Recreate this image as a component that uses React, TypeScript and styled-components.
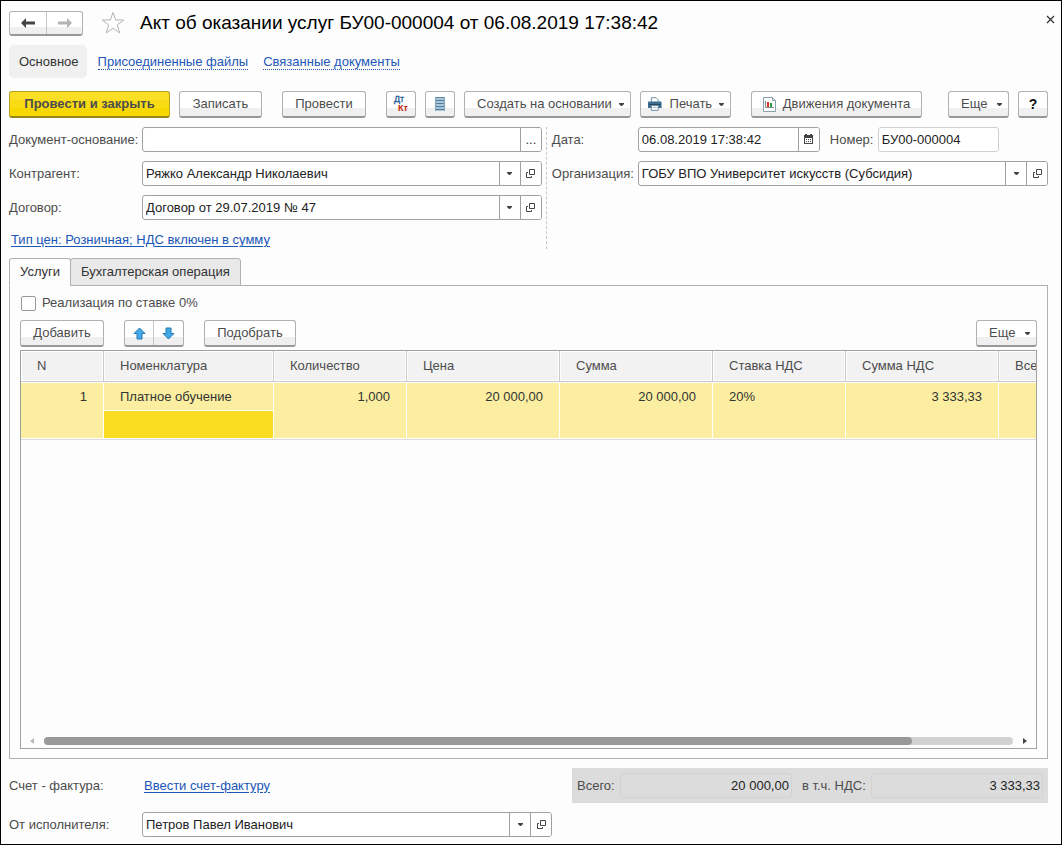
import React from "react";
import styled, { createGlobalStyle, css } from "styled-components";

const GlobalStyle = createGlobalStyle`
  *, *::before, *::after { box-sizing: border-box; }
  body { margin: 0; background: #fff; }
  body, button, input { font-family: "Liberation Sans", Arial, sans-serif; font-size: 13px; line-height: 16px; }
  button { cursor: pointer; }
`;

const Window = styled.main`
  display: flex;
  flex-direction: column;
  min-height: 100vh;
  padding: 8px 13px 7px 8px;
  border: 1px solid #000;
  background: #fdfdfd;
  color: #4c4c4c;
`;

const Header = styled.header`
  display: flex;
  align-items: center;
  height: 28px;
  margin-right: -9px;
`;

const Title = styled.h1`
  flex: 1;
  margin: 0 0 0 15px;
  font-size: 19px;
  line-height: 24px;
  font-weight: 400;
  color: #000;
  white-space: nowrap;
`;

const PlainButton = styled.button`
  display: flex;
  padding: 0;
  border: 0;
  background: none;
`;

const CloseButton = styled(PlainButton)`
  padding: 2px;
  margin-bottom: 8px;
`;

const StarButton = styled(PlainButton)`
  margin-left: 18px;
`;

const raised = css`
  border: 1px solid #b1b1b1;
  border-bottom: 2px solid #989898;
  border-radius: 3px;
  background: linear-gradient(#fff 0 66%, #f0f0f0 66% 100%);
`;

const ButtonGroup = styled.div<{ $height: number }>`
  ${raised}
  display: inline-flex;
  height: ${(p) => p.$height}px;
  overflow: hidden;
`;

const MoveGroup = styled(ButtonGroup)`
  margin: 0 20px;
`;

const GroupButton = styled.button<{ $width: number }>`
  display: flex;
  align-items: center;
  justify-content: center;
  width: ${(p) => p.$width}px;
  padding: 0;
  border: 0;
  background: none;
  & + & { border-left: 1px solid #c6c6c6; }
`;

const Button = styled.button<{ $width: number; $gap?: number; $primary?: boolean }>`
  ${raised}
  display: flex;
  flex: none;
  align-items: center;
  justify-content: center;
  gap: 7px;
  width: ${(p) => p.$width}px;
  height: 27px;
  margin-left: ${(p) => p.$gap ?? 0}px;
  padding: 0;
  color: #4c4c4c;
  white-space: nowrap;
  ${(p) =>
    p.$primary &&
    css`
      border-color: #b5a11c;
      border-bottom-color: #97871a;
      background: linear-gradient(#fbdf27 0 32%, #fadc14 32% 66%, #f7d800 66% 100%);
      font-weight: 700;
    `}
`;

const MenuButton = styled(Button)<{ $withIcon?: boolean }>`
  justify-content: flex-start;
  padding: 0 6px 0 ${(p) => (p.$withIcon ? 6 : 12)}px;
  & > svg:last-child { margin-left: auto; }
`;

const HelpButton = styled(Button)`
  color: #111;
  font-size: 14px;
  font-weight: 700;
`;

const Sections = styled.nav`
  display: flex;
  align-items: center;
  gap: 15px;
  height: 33px;
  margin-top: 8px;
`;

const CurrentSection = styled.span`
  display: flex;
  align-items: center;
  height: 33px;
  margin-right: -4px;
  padding: 1px 8px 0 10px;
  border-radius: 5px;
  background: #f0f0f0;
  color: #333;
`;

const SectionLink = styled.a`
  padding-top: 1px;
  border-bottom: 1px dotted #2257b8;
  color: #2257b8;
  line-height: 15px;
  text-decoration: none;
`;

const Link = styled.a`
  color: #1a55b8;
  text-decoration: underline;
  text-underline-offset: 2px;
`;

const Toolbar = styled.div`
  display: flex;
  align-items: center;
`;

const MainToolbar = styled(Toolbar)`
  margin-top: 13px;
`;

const TableToolbar = styled(Toolbar)`
  margin-top: 9px;
`;

const Spacer = styled.div`
  flex: 1;
`;

const Form = styled.div`
  display: flex;
  margin-top: 9px;
`;

const FormMain = styled.div`
  display: flex;
  flex: 538 1 0;
  flex-direction: column;
  gap: 9px;
  height: 122px;
  padding-right: 4px;
  border-right: 1px dashed #c8c8c8;
`;

const FormSide = styled.div`
  display: flex;
  flex: 501 1 0;
  flex-direction: column;
  gap: 9px;
  padding-left: 5px;
`;

const Row = styled.div`
  display: flex;
  align-items: center;
  height: 25px;
`;

const Label = styled.label<{ $width: number }>`
  flex: none;
  width: ${(p) => p.$width}px;
  white-space: nowrap;
`;

const Field = styled.div<{ $width?: number; $muted?: boolean }>`
  display: flex;
  flex: ${(p) => (p.$width ? `0 0 ${p.$width}px` : "1")};
  height: 25px;
  border: 1px solid ${(p) => (p.$muted ? "#d0d0d0" : "#a0a0a0")};
  border-radius: 3px;
  background: #fff;
  overflow: hidden;
`;

const TextBox = styled.input`
  flex: 1;
  min-width: 0;
  width: 0;
  padding: 0 3px;
  border: 0;
  outline: 0;
  background: transparent;
  color: #222;
`;

const FieldButton = styled.button`
  display: flex;
  flex: none;
  align-items: center;
  justify-content: center;
  width: 21px;
  padding: 0;
  border: 0;
  border-left: 1px solid #a0a0a0;
  background: #fff;
  color: #333;
`;

const NumberLabel = styled(Label)`
  margin-left: 10px;
`;

const PriceType = styled.div`
  margin-top: -17px;
  padding-left: 2px;
`;

const Tabs = styled.div`
  display: flex;
  margin-top: 10px;
`;

const Tab = styled.button<{ $active?: boolean }>`
  position: relative;
  height: 28px;
  margin-bottom: -1px;
  padding: 0 10px;
  border: 1px solid #b0b0b0;
  border-radius: 3px 3px 0 0;
  background: #e9e9e9;
  color: #333;
  & + & { margin-left: -1px; }
  ${(p) =>
    p.$active &&
    css`
      border-bottom-color: #fdfdfd;
      background: #fdfdfd;
    `}
`;

const Panel = styled.section`
  display: flex;
  flex: 1;
  flex-direction: column;
  min-width: 0;
  padding: 9px 10px;
  border: 1px solid #b0b0b0;
`;

const CheckLabel = styled.label`
  display: flex;
  align-items: center;
  gap: 6px;
  height: 16px;
`;

const CheckBox = styled.input`
  width: 15px;
  height: 15px;
  margin: 0 0 0 1px;
  border: 1px solid #999;
  border-radius: 2px;
  background: #fff;
  appearance: none;
`;

const Grid = styled.div`
  display: flex;
  flex: 1;
  flex-direction: column;
  min-width: 0;
  margin-top: 3px;
  border: 1px solid #a0a0a0;
  background: #fdfdfd;
`;

const GridView = styled.div`
  flex: 1;
  overflow: hidden;
`;

const Table = styled.table`
  width: 1151px;
  padding-bottom: 1px;
  border-bottom: 1px solid #dcdcdc;
  border-collapse: separate;
  border-spacing: 0;
  table-layout: fixed;
`;

const HeadCell = styled.th`
  height: 31px;
  padding: 0 16px;
  border-right: 1px solid #c8c8c8;
  border-bottom: 1px solid #c8c8c8;
  background: #f2f2f2;
  box-shadow: inset 0 0 0 1px #fff;
  font-weight: 400;
  text-align: left;
`;

const Cell = styled.td<{ $right?: boolean; $selected?: boolean }>`
  height: 28px;
  padding: 6px 16px 0;
  border-top: 1px solid #fff;
  border-right: 1px solid #fff;
  background: ${(p) => (p.$selected ? "#fadc20" : "#fbeea1")};
  background-clip: padding-box;
  color: #333;
  text-align: ${(p) => (p.$right ? "right" : "left")};
  vertical-align: top;
`;

const ScrollRow = styled.div`
  display: flex;
  align-items: center;
  height: 15px;
  padding: 0 8px;
`;

const ScrollTrack = styled.div`
  flex: 1;
  height: 8px;
  margin: 0 9px;
  border-radius: 4px;
  background: #d2d2d2;
`;

const ScrollThumb = styled.div`
  width: calc(90% - 4px);
  height: 8px;
  border-radius: 4px;
  background: #999;
`;

const Footer = styled.footer`
  display: flex;
  align-items: center;
  height: 35px;
  margin-top: 9px;
`;

const InvoiceLabel = styled.span`
  width: 135px;
`;

const Totals = styled.div`
  display: flex;
  align-items: center;
  gap: 5px;
  width: 476px;
  height: 35px;
  padding: 0 5px;
  background: #dcdcdc;
`;

const TotalLabel = styled.label`
  flex: none;
`;

const TotalBox = styled.input`
  flex: 1;
  min-width: 0;
  height: 25px;
  padding: 0 2px;
  border: 1px solid #d2d2d2;
  border-radius: 3px;
  background: #dcdcdc;
  color: #222;
  text-align: right;
  & + label { margin-left: 5px; }
`;

const PerformerRow = styled(Row)`
  margin-top: 9px;
`;

const Caret = () => (
  <svg width="5" height="3" viewBox="0 0 5 3" aria-hidden="true">
    <path d="M0 0h5v1L3 3H2L0 1z" fill="#444" />
  </svg>
);

const OpenIcon = () => (
  <svg width="11" height="11" viewBox="0 0 11 11" fill="none" stroke="#444" aria-hidden="true">
    <path d="M4.500 1.500h5v5h-5zM3 4.500H1.500v5h5V8" />
  </svg>
);

const CalendarIcon = () => (
  <svg width="11" height="11" viewBox="0 0 11 11" aria-hidden="true">
    <path d="M1 1h1V0h2v1h3V0h2v1h1v9H1zM2 4v5h7V4z" fill="#444" fillRule="evenodd" />
    <path d="M3 5h1v1H3zM5 5h1v1H5zM7 5h1v1H7zM3 7h1v1H3zM5 7h1v1H5zM7 7h1v1H7z" fill="#444" />
  </svg>
);

const Arrow = ({ back }: { back?: boolean }) => (
  <svg width="14" height="10" viewBox="0 0 14 10" aria-hidden="true">
    <path
      d={back ? "M0 5L5 0v3.500h9v3H5V10z" : "M14 5L9 0v3.500H0v3h9V10z"}
      fill={back ? "#444" : "#b3b3b3"}
    />
  </svg>
);

const MoveIcon = ({ down }: { down?: boolean }) => (
  <svg width="13" height="13" viewBox="0 0 13 13" aria-hidden="true">
    <path
      d={down ? "M6.500 12L1 6.500h3V1h5v5.500h3z" : "M6.500 1L1 6.500h3V12h5V6.500h3z"}
      fill="#3fa9ea"
      stroke="#2a78ae"
      strokeLinejoin="round"
    />
  </svg>
);

const StarIcon = () => (
  <svg width="24" height="24" viewBox="0 0 24 24" fill="#fff" stroke="#b3b3b3" aria-hidden="true">
    <path d="M12 1.500l2.700 7.500h8l-6.400 4.900 2.400 8L12 17.200l-6.700 4.700 2.400-8L1.300 9h8z" />
  </svg>
);

const CloseIcon = () => (
  <svg width="9" height="9" viewBox="0 0 9 9" stroke="#333" strokeWidth="1.200" aria-hidden="true">
    <path d="M1 1l7 7M8 1L1 8" />
  </svg>
);

const PostingsIcon = () => (
  <svg width="18" height="20" viewBox="0 0 18 20" fontFamily="Liberation Sans" fontSize="9" aria-hidden="true">
    <text x="2" y="8" fill="#1d5a96" stroke="#1d5a96" strokeWidth="0.300">Дт</text>
    <text x="6" y="17" fill="#c8200c" fontWeight="700">Кт</text>
  </svg>
);

const RegisterIcon = () => (
  <svg width="12" height="16" viewBox="0 0 12 16" aria-hidden="true">
    <path d="M1 1h10v14H1z" fill="#a9c9da" />
    <path d="M1 1.500h10M1 4.500h10M1 7.500h10M1 10.500h10M1 13.500h10" stroke="#557f98" />
    <path d="M1.500 1v14M10.500 1v14" stroke="#7fa5ba" />
  </svg>
);

const PrinterIcon = () => (
  <svg width="16" height="15" viewBox="0 0 16 15" aria-hidden="true">
    <path d="M4.500 5V0.500h5l2 2V5" fill="#fff" stroke="#6d8ca0" />
    <path d="M2 4.500h12q1 0 1 1V11H1V5.500q0-1 1-1z" fill="#3d6d91" />
    <path d="M2 7.500h12" stroke="#1f4765" />
    <path d="M4.500 8.500h7v5h-7z" fill="#fff" stroke="#6d8ca0" />
    <path d="M6 10.500h4" stroke="#9bb0be" />
  </svg>
);

const ReportIcon = () => (
  <svg width="13" height="15" viewBox="0 0 13 15" aria-hidden="true">
    <path d="M0.500 0.500h9l3 3v11H0.500z" fill="#fff" stroke="#8aa0ad" />
    <path d="M9.500 0.500v3h3" fill="none" stroke="#8aa0ad" />
    <path d="M2.500 4v6.500H11" fill="none" stroke="#7c8d97" />
    <path d="M4 5h2v5H4z" fill="#e0301e" />
    <path d="M7 6h2v4H7z" fill="#2b9a3b" />
  </svg>
);

const ScrollArrow = ({ right }: { right?: boolean }) => (
  <svg width="6" height="6" viewBox="0 0 6 6" aria-hidden="true">
    <path d={right ? "M1 0v6l4-3z" : "M5 0v6L1 3z"} fill={right ? "#444" : "#b8b8b8"} />
  </svg>
);

interface ComboProps {
  id: string;
  value: string;
  width?: number;
}

const ComboField = ({ id, value, width }: ComboProps) => (
  <Field $width={width}>
    <TextBox id={id} defaultValue={value} />
    <FieldButton type="button" aria-label="Выбрать"><Caret /></FieldButton>
    <FieldButton type="button" aria-label="Открыть"><OpenIcon /></FieldButton>
  </Field>
);

const columns = [
  { title: "N", width: 83 },
  { title: "Номенклатура", width: 170 },
  { title: "Количество", width: 133 },
  { title: "Цена", width: 153 },
  { title: "Сумма", width: 153 },
  { title: "Ставка НДС", width: 133 },
  { title: "Сумма НДС", width: 153 },
  { title: "Всего", width: 173 },
];

export default function App() {
  return (
    <>
      <GlobalStyle />
      <Window>
        <Header>
          <ButtonGroup $height={25}>
            <GroupButton $width={36} type="button" aria-label="Назад"><Arrow back /></GroupButton>
            <GroupButton $width={36} type="button" aria-label="Вперед"><Arrow /></GroupButton>
          </ButtonGroup>
          <StarButton type="button" aria-label="В избранное"><StarIcon /></StarButton>
          <Title>Акт об оказании услуг БУ00-000004 от 06.08.2019 17:38:42</Title>
          <CloseButton type="button" aria-label="Закрыть"><CloseIcon /></CloseButton>
        </Header>

        <Sections>
          <CurrentSection>Основное</CurrentSection>
          <SectionLink href="#files">Присоединенные файлы</SectionLink>
          <SectionLink href="#related">Связанные документы</SectionLink>
        </Sections>

        <MainToolbar>
          <Button type="button" $width={161} $primary>Провести и закрыть</Button>
          <Button type="button" $width={83} $gap={9}>Записать</Button>
          <Button type="button" $width={84} $gap={20}>Провести</Button>
          <Button type="button" $width={30} $gap={20} aria-label="Проводки"><PostingsIcon /></Button>
          <Button type="button" $width={30} $gap={9} aria-label="Реестр"><RegisterIcon /></Button>
          <MenuButton type="button" $width={167} $gap={9}>Создать на основании <Caret /></MenuButton>
          <MenuButton type="button" $width={91} $gap={9} $withIcon><PrinterIcon /> Печать <Caret /></MenuButton>
          <Button type="button" $width={171} $gap={20}><ReportIcon /> Движения документа</Button>
          <Spacer />
          <MenuButton type="button" $width={61}>Еще <Caret /></MenuButton>
          <HelpButton type="button" $width={30} $gap={9}>?</HelpButton>
        </MainToolbar>

        <Form>
          <FormMain>
            <Row>
              <Label $width={133} htmlFor="basis">Документ-основание:</Label>
              <Field>
                <TextBox id="basis" />
                <FieldButton type="button">...</FieldButton>
              </Field>
            </Row>
            <Row>
              <Label $width={133} htmlFor="partner">Контрагент:</Label>
              <ComboField id="partner" value="Ряжко Александр Николаевич" />
            </Row>
            <Row>
              <Label $width={133} htmlFor="contract">Договор:</Label>
              <ComboField id="contract" value="Договор от 29.07.2019 № 47" />
            </Row>
          </FormMain>
          <FormSide>
            <Row>
              <Label $width={86} htmlFor="date">Дата:</Label>
              <Field $width={182}>
                <TextBox id="date" defaultValue="06.08.2019 17:38:42" />
                <FieldButton type="button" aria-label="Календарь"><CalendarIcon /></FieldButton>
              </Field>
              <NumberLabel $width={48} htmlFor="number">Номер:</NumberLabel>
              <Field $width={121} $muted>
                <TextBox id="number" defaultValue="БУ00-000004" />
              </Field>
            </Row>
            <Row>
              <Label $width={86} htmlFor="company">Организация:</Label>
              <ComboField id="company" value="ГОБУ ВПО Университет искусств (Субсидия)" />
            </Row>
          </FormSide>
        </Form>

        <PriceType>
          <Link href="#prices">Тип цен: Розничная; НДС включен в сумму</Link>
        </PriceType>

        <Tabs role="tablist">
          <Tab type="button" role="tab" aria-selected="true" $active>Услуги</Tab>
          <Tab type="button" role="tab" aria-selected="false">Бухгалтерская операция</Tab>
        </Tabs>

        <Panel>
          <CheckLabel>
            <CheckBox type="checkbox" />
            Реализация по ставке 0%
          </CheckLabel>

          <TableToolbar>
            <Button type="button" $width={84}>Добавить</Button>
            <MoveGroup $height={27}>
              <GroupButton $width={28} type="button" aria-label="Вверх"><MoveIcon /></GroupButton>
              <GroupButton $width={30} type="button" aria-label="Вниз"><MoveIcon down /></GroupButton>
            </MoveGroup>
            <Button type="button" $width={92}>Подобрать</Button>
            <Spacer />
            <MenuButton type="button" $width={61}>Еще <Caret /></MenuButton>
          </TableToolbar>

          <Grid>
            <GridView>
              <Table>
                <colgroup>
                  {columns.map((c) => <col key={c.title} width={c.width} />)}
                </colgroup>
                <thead>
                  <tr>{columns.map((c) => <HeadCell key={c.title}>{c.title}</HeadCell>)}</tr>
                </thead>
                <tbody>
                  <tr>
                    <Cell rowSpan={2} $right>1</Cell>
                    <Cell>Платное обучение</Cell>
                    <Cell rowSpan={2} $right>1,000</Cell>
                    <Cell rowSpan={2} $right>20 000,00</Cell>
                    <Cell rowSpan={2} $right>20 000,00</Cell>
                    <Cell rowSpan={2}>20%</Cell>
                    <Cell rowSpan={2} $right>3 333,33</Cell>
                    <Cell rowSpan={2} />
                  </tr>
                  <tr>
                    <Cell $selected />
                  </tr>
                </tbody>
              </Table>
            </GridView>
            <ScrollRow>
              <ScrollArrow />
              <ScrollTrack><ScrollThumb /></ScrollTrack>
              <ScrollArrow right />
            </ScrollRow>
          </Grid>
        </Panel>

        <Footer>
          <InvoiceLabel>Счет - фактура:</InvoiceLabel>
          <Link href="#invoice">Ввести счет-фактуру</Link>
          <Spacer />
          <Totals>
            <TotalLabel htmlFor="total">Всего:</TotalLabel>
            <TotalBox id="total" readOnly value="20 000,00" />
            <TotalLabel htmlFor="vat">в т.ч. НДС:</TotalLabel>
            <TotalBox id="vat" readOnly value="3 333,33" />
          </Totals>
        </Footer>

        <PerformerRow>
          <Label $width={133} htmlFor="performer">От исполнителя:</Label>
          <ComboField id="performer" value="Петров Павел Иванович" width={410} />
        </PerformerRow>
      </Window>
    </>
  );
}
